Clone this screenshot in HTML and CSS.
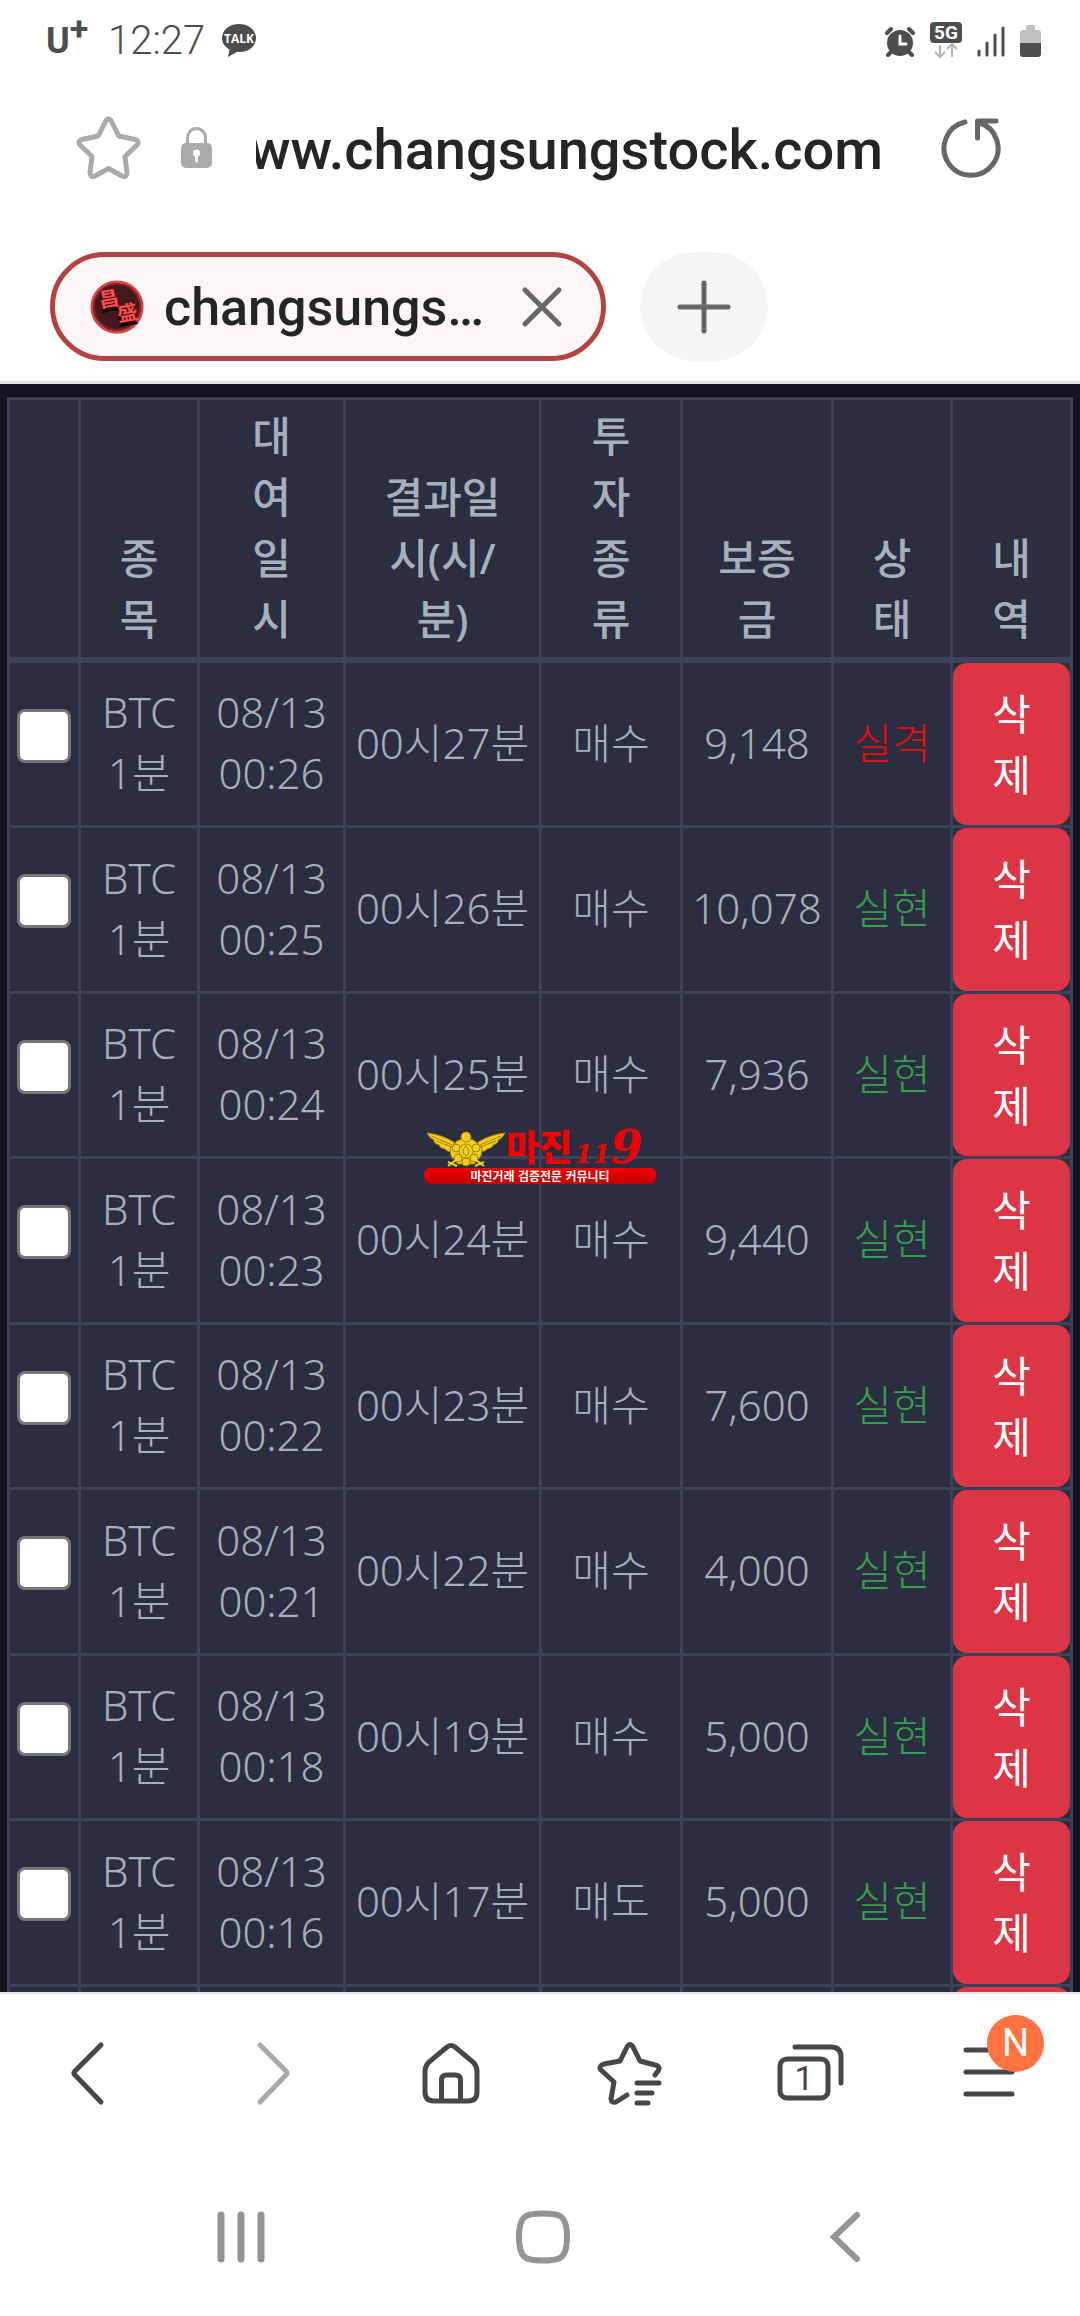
FILE: index.html
```html
<!DOCTYPE html>
<html lang="ko">
<head>
    <meta charset="UTF-8">
    <meta name="viewport" content="width=device-width, initial-scale=1.0">
    <title>changsungstock</title>
    <link rel="stylesheet" href="styles.css">
</head>
<body>
    <header class="browser-top">
        <div class="status-bar">
            <span class="carrier">U<sup>+</sup></span>
            <span class="clock">12:27</span>
            <svg class="talk" width="34" height="36" viewBox="0 0 34 36">
                <path d="M17 1C7.500 1 0 7 0 15c0 5 3 9 7.500 11.500L6 34l9-5.200c11 1 19-5 19-13.800C34 7 26.500 1 17 1z" fill="#4d4d4d"/>
                <text x="17" y="20" text-anchor="middle" class="talk-text">TALK</text>
            </svg>
            <div class="status-icons">
                <svg width="30" height="40" viewBox="0 0 30 40">
                    <circle cx="15" cy="22" r="13" fill="#4d4d4d"/>
                    <path d="M2 12l4-4M28 12l-4-4M6 31l-3 3M24 31l3 3" stroke="#4d4d4d" stroke-width="4" stroke-linecap="round"/>
                    <path d="M15 15v8h6" fill="none" stroke="#fff" stroke-width="3" stroke-linecap="round"/>
                </svg>
                <svg width="32" height="40" viewBox="0 0 32 40">
                    <rect x="0" y="1" width="32" height="21" rx="4" fill="#4d4d4d"/>
                    <text x="16" y="18" text-anchor="middle" class="net-text">5G</text>
                    <path d="M10 24v11M5 31l5 5 5-5M22 36V24M17 28l5-5 5 5" fill="none" stroke="#b5b5b5" stroke-width="2"/>
                </svg>
                <svg width="28" height="40" viewBox="0 0 28 40">
                    <path d="M2 30v4M10 22v12M18 14v20M26 7v27" stroke="#4d4d4d" stroke-width="3" stroke-linecap="round"/>
                </svg>
                <svg width="21" height="40" viewBox="0 0 21 40">
                    <path d="M6 9V6q0-2 2-2h5q2 0 2 2v3h3q3 0 3 3v10H0V12q0-3 3-3z" fill="#c1c1c1"/>
                    <path d="M0 22h21v11q0 3-3 3H3q-3 0-3-3z" fill="#4d4d4d"/>
                </svg>
            </div>
        </div>

        <div class="address-bar">
            <button type="button" class="icon-btn" aria-label="Bookmark">
                <svg width="68" height="68" viewBox="0 0 68 68">
                    <path d="M31.500 7.500Q34.500 2.500 37.500 7.500L44.800 22 61 25.500Q66 27 63 31L51 42.500 53 59Q52.500 64 48 62L34.500 54.500 21 62Q16.500 64 16 59L18 42.500 6 31Q3 27 8 25.500L24.200 22Z" fill="none" stroke="#a9abaa" stroke-width="5" stroke-linejoin="round"/>
                </svg>
            </button>
            <svg class="lock" width="31" height="42" viewBox="0 0 31 42">
                <path d="M6.500 18V11a9 9.500 0 0 1 18 0v7" fill="none" stroke="#ababab" stroke-width="3"/>
                <rect x="0" y="16" width="31" height="25" rx="5" fill="#ababab"/>
                <circle cx="15.500" cy="26" r="3.500" fill="#fff"/>
                <path d="M15.500 27v7" stroke="#fff" stroke-width="3" stroke-linecap="round"/>
            </svg>
            <input type="text" class="url" value="www.changsungstock.com" aria-label="Address">
            <button type="button" class="icon-btn" aria-label="Reload">
                <svg width="64" height="64" viewBox="0 0 64 64">
                    <path d="M27 6A27 27 0 1 0 41 6.500" fill="none" stroke="#666" stroke-width="5" stroke-linecap="round"/>
                    <path d="M39.500 22V5H58" fill="none" stroke="#666" stroke-width="5" stroke-linecap="round" stroke-linejoin="round"/>
                </svg>
            </button>
        </div>

        <div class="tabs">
            <div class="tab">
                <svg width="54" height="54" viewBox="0 0 54 54">
                    <circle cx="27" cy="28" r="26" fill="#c9c4c4"/>
                    <circle cx="27" cy="27" r="25" fill="#43191b" stroke="#d9403f" stroke-width="3"/>
                    <circle cx="27" cy="27" r="23" fill="none" stroke="#7a2325" stroke-width="2"/>
                    <g class="seal-shadow"><text x="8" y="30" transform="rotate(-10 20 20)">昌</text><text x="27" y="44" transform="rotate(-10 38 36)">盛</text></g>
                    <g class="seal"><text x="9" y="26" transform="rotate(-10 20 20)">昌</text><text x="28" y="40" transform="rotate(-10 38 36)">盛</text></g>
                </svg>
                <span class="tab-title">changsungs…</span>
                <button type="button" class="icon-btn" aria-label="Close tab">
                    <svg width="44" height="44" viewBox="0 0 44 44"><path d="M5 5l34 34M39 5L5 39" stroke="#666" stroke-width="5" stroke-linecap="round"/></svg>
                </button>
            </div>
            <button type="button" class="new-tab" aria-label="New tab">
                <svg width="54" height="54" viewBox="0 0 54 54"><path d="M27 3v48M3 27h48" stroke="#666" stroke-width="5" stroke-linecap="round"/></svg>
            </button>
        </div>
    </header>

    <main class="page">
        <table class="history">
            <colgroup>
                <col class="c-check"><col class="c-item"><col class="c-date"><col class="c-result"><col class="c-type"><col class="c-amount"><col class="c-state"><col class="c-del">
            </colgroup>
            <thead>
                <tr>
                    <th></th>
                    <th>종<br>목</th>
                    <th>대<br>여<br>일<br>시</th>
                    <th>결과일<br>시(시/<br>분)</th>
                    <th>투<br>자<br>종<br>류</th>
                    <th>보증<br>금</th>
                    <th>상<br>태</th>
                    <th>내<br>역</th>
                </tr>
            </thead>
            <tbody>
                <tr>
                    <td class="check"><input type="checkbox" aria-label="00시27분"></td>
                    <td>BTC<br>1분</td>
                    <td>08/13<br>00:26</td>
                    <td>00시27분</td>
                    <td>매수</td>
                    <td>9,148</td>
                    <td class="lose">실격</td>
                    <td class="del"><button type="button" class="btn-del">삭제</button></td>
                </tr>
                <tr>
                    <td class="check"><input type="checkbox" aria-label="00시26분"></td>
                    <td>BTC<br>1분</td>
                    <td>08/13<br>00:25</td>
                    <td>00시26분</td>
                    <td>매수</td>
                    <td>10,078</td>
                    <td class="win">실현</td>
                    <td class="del"><button type="button" class="btn-del">삭제</button></td>
                </tr>
                <tr>
                    <td class="check"><input type="checkbox" aria-label="00시25분"></td>
                    <td>BTC<br>1분</td>
                    <td>08/13<br>00:24</td>
                    <td>00시25분</td>
                    <td>매수</td>
                    <td>7,936</td>
                    <td class="win">실현</td>
                    <td class="del"><button type="button" class="btn-del">삭제</button></td>
                </tr>
                <tr>
                    <td class="check"><input type="checkbox" aria-label="00시24분"></td>
                    <td>BTC<br>1분</td>
                    <td>08/13<br>00:23</td>
                    <td>00시24분</td>
                    <td>매수</td>
                    <td>9,440</td>
                    <td class="win">실현</td>
                    <td class="del"><button type="button" class="btn-del">삭제</button></td>
                </tr>
                <tr>
                    <td class="check"><input type="checkbox" aria-label="00시23분"></td>
                    <td>BTC<br>1분</td>
                    <td>08/13<br>00:22</td>
                    <td>00시23분</td>
                    <td>매수</td>
                    <td>7,600</td>
                    <td class="win">실현</td>
                    <td class="del"><button type="button" class="btn-del">삭제</button></td>
                </tr>
                <tr>
                    <td class="check"><input type="checkbox" aria-label="00시22분"></td>
                    <td>BTC<br>1분</td>
                    <td>08/13<br>00:21</td>
                    <td>00시22분</td>
                    <td>매수</td>
                    <td>4,000</td>
                    <td class="win">실현</td>
                    <td class="del"><button type="button" class="btn-del">삭제</button></td>
                </tr>
                <tr>
                    <td class="check"><input type="checkbox" aria-label="00시19분"></td>
                    <td>BTC<br>1분</td>
                    <td>08/13<br>00:18</td>
                    <td>00시19분</td>
                    <td>매수</td>
                    <td>5,000</td>
                    <td class="win">실현</td>
                    <td class="del"><button type="button" class="btn-del">삭제</button></td>
                </tr>
                <tr>
                    <td class="check"><input type="checkbox" aria-label="00시17분"></td>
                    <td>BTC<br>1분</td>
                    <td>08/13<br>00:16</td>
                    <td>00시17분</td>
                    <td>매도</td>
                    <td>5,000</td>
                    <td class="win">실현</td>
                    <td class="del"><button type="button" class="btn-del">삭제</button></td>
                </tr>
                <tr>
                    <td></td><td></td><td></td><td></td><td></td><td></td><td></td>
                    <td class="del"><button type="button" class="btn-del" aria-label="삭제"></button></td>
                </tr>
            </tbody>
        </table>

        <div class="watermark">
            <div class="mark-top">
                <svg width="80" height="38" viewBox="0 0 80 38">
                    <g fill="#f2cf1d" stroke="#a58300" stroke-width="1">
                        <path d="M28 12Q14 4 1 3q3 6 7 7-1 3 5 5 0 3 6 4 2 3 9 3z"/>
                        <path d="M52 12Q66 4 79 3q-3 6-7 7 1 3-5 5 0 3-6 4-2 3-9 3z"/>
                        <path d="M40 7l9 4 7 7-1 8-7 8H32l-7-8-1-8 7-7z"/>
                        <circle cx="40" cy="7" r="5"/>
                        <circle cx="40" cy="21" r="7"/>
                        <circle cx="30" cy="18" r="4"/><circle cx="50" cy="18" r="4"/>
                        <circle cx="32" cy="28" r="4"/><circle cx="48" cy="28" r="4"/>
                        <circle cx="40" cy="32" r="4"/>
                    </g>
                    <path d="M5 6l21 9M10 11l16 6M75 6l-21 9M70 11l-16 6M40 26q-6-4 0-10 6 6 0 10" fill="none" stroke="#a58300" stroke-width="1"/>
                    <path d="M22 32l9 4M22 36l8-6M58 32l-9 4M58 36l-8-6" stroke="#f2cf1d" stroke-width="2"/>
                </svg>
                <strong class="mark-name">마진</strong>
                <span class="mark-num">11<b>9</b></span>
            </div>
            <div class="mark-bar">마진거래 검증전문 커뮤니티</div>
        </div>
    </main>

    <footer class="browser-bottom">
        <nav class="toolbar">
            <button type="button" class="icon-btn" aria-label="Back">
                <svg width="72" height="72" viewBox="0 0 72 72"><path d="M47 8L21 34q-2 2 0 4L47 65" fill="none" stroke="#474747" stroke-width="5" stroke-linecap="round" stroke-linejoin="round"/></svg>
            </button>
            <button type="button" class="icon-btn" aria-label="Forward">
                <svg width="72" height="72" viewBox="0 0 72 72"><path d="M26 8L52 34q2 2 0 4L26 65" fill="none" stroke="#a9a9a9" stroke-width="5" stroke-linecap="round" stroke-linejoin="round"/></svg>
            </button>
            <button type="button" class="icon-btn" aria-label="Home">
                <svg width="72" height="72" viewBox="0 0 72 72" fill="none" stroke="#474747" stroke-width="5">
                    <path d="M33 10q4-3 8 0l18 15q4 4 4 9v21q0 9-9 9H20q-9 0-9-9V34q0-5 4-9z"/>
                    <path d="M27.500 63V43q0-5 5-5h9q5 0 5 5v20"/>
                </svg>
            </button>
            <button type="button" class="icon-btn" aria-label="Bookmarks">
                <svg width="72" height="72" viewBox="0 0 72 72" fill="none" stroke="#474747" stroke-width="5" stroke-linecap="round" stroke-linejoin="round">
                    <path d="M61 38l3-4q3-5-3-6l-15-4-7-14q-3-5-6 0l-7 14-16 3q-6 2-3 6l13 12-3 17q0 4 5 3l11-7"/>
                    <path d="M43 46h22M43 56h15M43 66h11"/>
                </svg>
            </button>
            <button type="button" class="icon-btn" aria-label="Tabs">
                <svg width="72" height="72" viewBox="0 0 72 72" fill="none" stroke="#474747" stroke-width="5" stroke-linecap="round">
                    <rect x="6" y="22" width="48" height="39" rx="7"/>
                    <path d="M21 10h36q10 0 10 10v26"/>
                    <text x="30" y="53" text-anchor="middle" class="tab-count">1</text>
                </svg>
            </button>
            <button type="button" class="icon-btn menu" aria-label="Menu">
                <svg width="72" height="72" viewBox="0 0 72 72"><path d="M12 13h46M12 35h46M12 57h46" stroke="#474747" stroke-width="5" stroke-linecap="round"/></svg>
                <span class="badge">N</span>
            </button>
        </nav>
        <nav class="system-nav">
            <button type="button" class="icon-btn" aria-label="Recents">
                <svg width="72" height="72" viewBox="0 0 72 72"><path d="M16 14v44M36 14v44M56 14v44" stroke="#949494" stroke-width="7" stroke-linecap="round"/></svg>
            </button>
            <button type="button" class="icon-btn" aria-label="Home screen">
                <svg width="72" height="72" viewBox="0 0 72 72"><path d="M36 12.500q12 0 17 2.500 7 4 7 21 0 17-7 21-5 2.500-17 2.500T19 57q-7-4-7-21 0-17 7-21 5-2.500 17-2.500z" fill="none" stroke="#949494" stroke-width="6"/></svg>
            </button>
            <button type="button" class="icon-btn" aria-label="System back">
                <svg width="72" height="72" viewBox="0 0 72 72"><path d="M48 14L25 36l23 22" fill="none" stroke="#949494" stroke-width="6" stroke-linecap="round"/></svg>
            </button>
        </nav>
    </footer>
</body>
</html>
```
FILE: styles.css
```css
* { box-sizing: border-box; }
body { margin: 0; height: 100vh; display: flex; flex-direction: column; background: #fff; color: #252525; font-family: Roboto, "Noto Sans CJK KR", sans-serif; }
button { font-family: inherit; border: none; margin: 0; padding: 0; cursor: pointer; }
svg { display: block; flex-shrink: 0; }
.icon-btn { background: none; display: flex; align-items: center; justify-content: center; }

/* top */
.browser-top { border-bottom: 3px solid #e4e5e3; padding-bottom: 20px; }
.status-bar { height: 80px; padding: 2px 39px 0 46px; display: flex; align-items: center; color: #4d4d4d; }
.carrier { width: 62px; font-size: 36px; font-weight: 700; line-height: 40px; }
.carrier sup { font-size: 34px; line-height: 0; }
.clock { width: 114px; font-size: 40px; font-weight: 300; line-height: 40px; }
.talk-text { font: 700 12px "Open Sans", sans-serif; fill: #fff; }
.net-text { font: 700 19px Roboto, sans-serif; fill: #fff; }
.status-icons { margin-left: auto; display: flex; gap: 15px; }

.address-bar { height: 136px; padding: 0 78px 0 74px; display: flex; align-items: center; }
.lock { margin: 0 44px 0 39px; }
.url { flex: 1; min-width: 0; margin-right: 55px; padding: 4px 0 0; border: none; outline: none; background: none; direction: rtl; color: #252525; font-family: Roboto, sans-serif; font-size: 56px; font-weight: 500; line-height: 72px; }

.tabs { padding: 36px 50px 0; display: flex; gap: 34px; }
.tab { width: 556px; height: 109px; padding: 0 37px 0 35px; display: flex; align-items: center; background: #fbf7f6; border: 5px solid #b24340; border-radius: 55px; }
.tab-title { flex: 1; margin-left: 20px; padding-top: 3px; font-size: 52px; font-weight: 500; line-height: 60px; white-space: nowrap; }
.seal, .seal-shadow { font: 700 20px "Noto Sans CJK KR", sans-serif; }
.seal { fill: #ff4a4d; }
.seal-shadow { fill: #100506; }
.new-tab { width: 128px; height: 109px; background: #f5f5f5; border-radius: 55px; display: flex; align-items: center; justify-content: center; }

/* trade history */
.page { flex: 1; min-height: 0; overflow: hidden; position: relative; padding: 13px 7px 0; background: #12141f; }
.history { width: 100%; table-layout: fixed; border-collapse: collapse; background: #2b2e41; color: #a6b0bd; font-family: "Noto Sans", "Noto Sans CJK KR", sans-serif; font-size: 42px; font-weight: 300; line-height: 61px; text-align: center; }
.history th, .history td { padding: 0 0 3px; border: 3px solid #3b4259; white-space: nowrap; }
.history th { height: 261px; padding-bottom: 8px; vertical-align: bottom; font-weight: 500; border-bottom-width: 6px; }
.history td { height: 165px; vertical-align: middle; }
.history tr:nth-child(even) td { height: 166px; }
.c-check { width: 71px; }
.c-item { width: 119px; }
.c-date { width: 146px; }
.c-result { width: 196px; }
.c-type { width: 141px; }
.c-amount { width: 151px; }
.c-state { width: 119px; }
.c-del { width: 120px; }
.history .check { padding-bottom: 16px; }
.history .del { padding: 0; }
.check input { appearance: none; display: block; width: 54px; height: 54px; margin: 0 auto; background: #fff; border: 3px solid #767676; border-radius: 8px; }
.history .lose { color: #e60c0c; }
.history .win { color: #35a04c; }
.btn-del { display: block; width: 100%; height: 100%; min-height: 162px; padding: 18px 34px 22px; background: #dc3545; color: #fff; border-radius: 14px; font-family: "Noto Sans CJK KR", sans-serif; font-size: 42px; font-weight: 400; line-height: 61px; white-space: normal; }

.watermark { position: absolute; top: 746px; left: 50%; width: 232px; margin-left: -116px; color: #f00000; }
.mark-top { height: 38px; padding-left: 2px; display: flex; align-items: flex-start; }
.mark-name { font-family: "Noto Sans CJK KR", sans-serif; font-size: 36px; font-weight: 900; line-height: 30px; }
.mark-num { margin-left: 2px; font: italic 700 26px/34px "DejaVu Serif", serif; white-space: nowrap; }
.mark-num b { font-size: 46px; line-height: 34px; }
.mark-bar { height: 16px; border-radius: 6px; background: linear-gradient(#f50000, #c00000); color: #fff; font: 700 12px/16px "Noto Sans CJK KR", sans-serif; text-align: center; }

/* bottom */
.browser-bottom { border-top: 2px solid #e4e5ea; }
.toolbar { height: 158px; display: grid; grid-template-columns: repeat(6, 1fr); }
.tab-count { font: 400 34px Roboto, sans-serif; fill: #474747; stroke: none; }
.menu { position: relative; }
.badge { position: absolute; left: 87px; top: 21px; width: 57px; height: 57px; border-radius: 50%; background: #ff7340; color: #fff; font-size: 38px; line-height: 57px; text-align: center; }
.system-nav { height: 164px; padding: 6px 0 0 6px; display: flex; align-items: center; justify-content: center; gap: 230px; }
```
